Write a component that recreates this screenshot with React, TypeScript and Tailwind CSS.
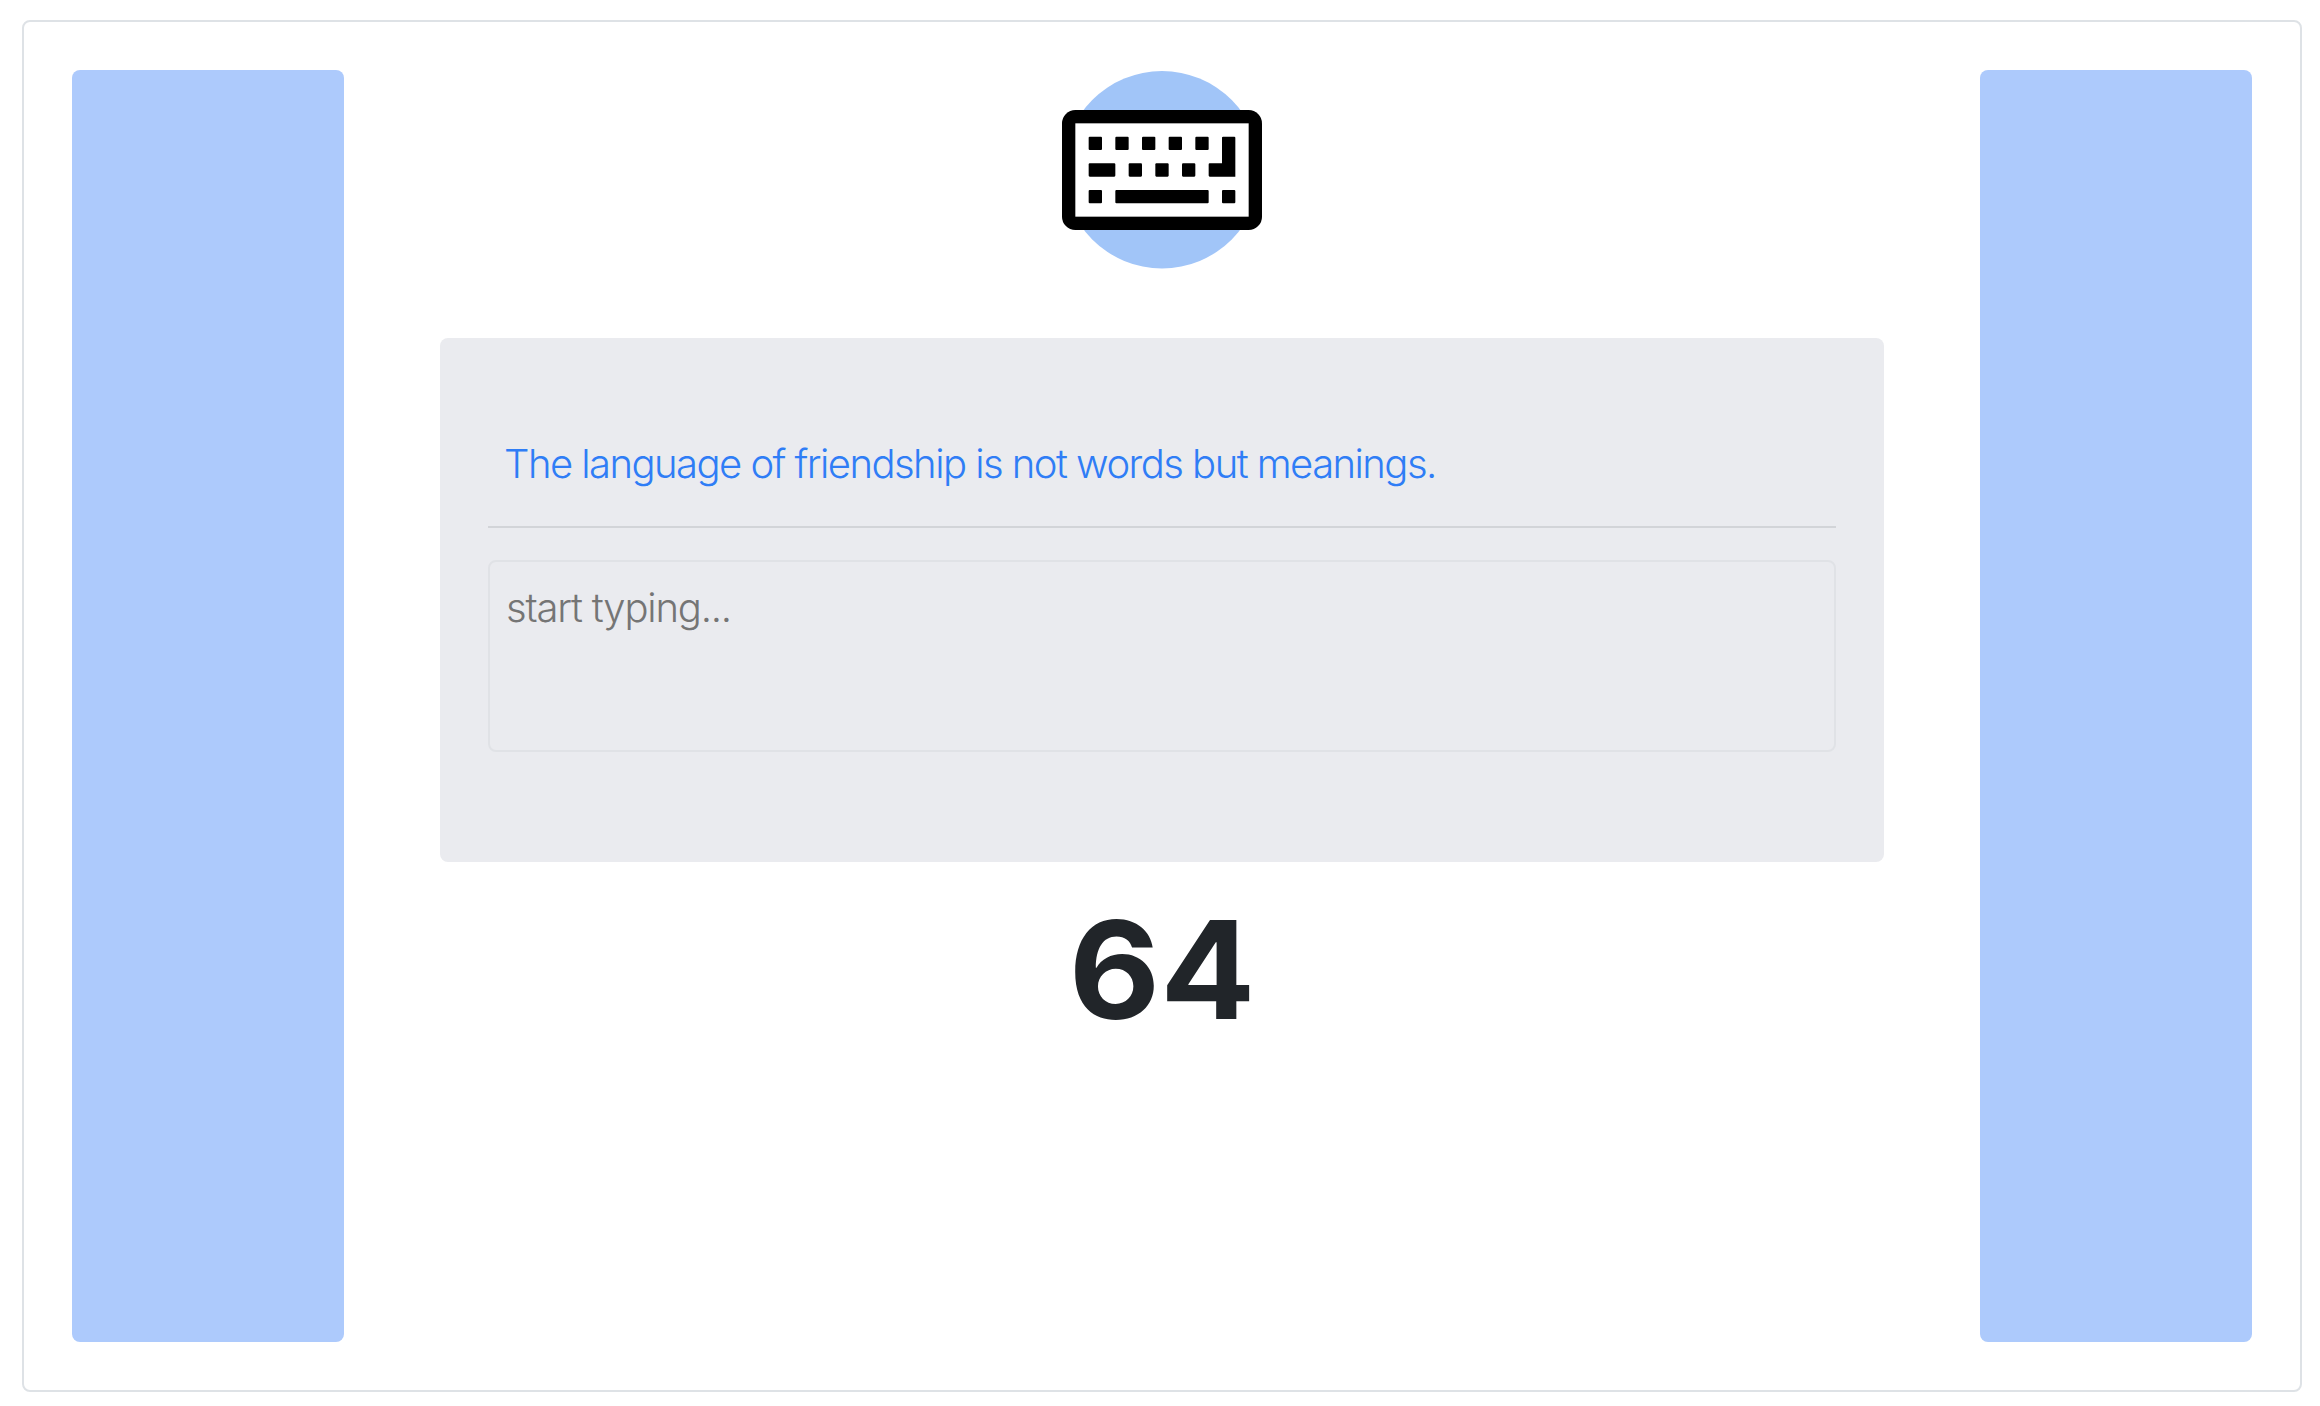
function KeyboardLogo() {
  return (
    <svg className="h-[200px] w-[200px]" viewBox="0 0 15 15" aria-hidden="true">
      <circle cx="7.5" cy="7.48" r="7.4" fill="#a1c5f8" />
      <rect x="0" y="3" width="15" height="9" rx="1" fill="#000" />
      <rect x="1" y="4" width="13" height="7" fill="#fff" />
      <g fill="#000">
        {[2, 4, 6, 8, 10].map((x) => (
          <rect key={x} x={x} y="5" width="1" height="1" rx="0.08" />
        ))}
        <rect x="2" y="7" width="2" height="1" rx="0.08" />
        {[5, 7, 9].map((x) => (
          <rect key={x} x={x} y="7" width="1" height="1" rx="0.08" />
        ))}
        <path d="M12.08 5h.84a.08.08 0 0 1 .08.08V8h-1.92a.08.08 0 0 1-.08-.08v-.84a.08.08 0 0 1 .08-.08H12V5.08a.08.08 0 0 1 .08-.08z" />
        <rect x="2" y="9" width="1" height="1" rx="0.08" />
        <rect x="4" y="9" width="7" height="1" rx="0.08" />
        <rect x="12" y="9" width="1" height="1" rx="0.08" />
      </g>
    </svg>
  );
}

export default function App() {
  return (
    <div className="h-[1406px] w-[2320px] bg-white pt-[20px] pl-[22px] font-['Inter',sans-serif] text-[#212529]">
      <div className="flex h-[1372px] w-[2280px] justify-between rounded-lg border-2 border-[#dee2e6] p-12">
        <aside className="w-[272px] rounded-lg bg-[#adcafc]" />
        <main className="flex w-[1444px] flex-col items-center">
          <KeyboardLogo />
          <section className="mt-[68px] h-[524px] w-full rounded-lg bg-[#eaebef] px-12 pt-[96px]">
            <p className="h-[92px] pl-4 text-[40px] leading-[60px] font-light tracking-[-1.54px] whitespace-nowrap text-[#2f7df6]">
              The language of friendship is not words but meanings.
            </p>
            <hr className="border-t-2 border-[#d2d4d8]" />
            <textarea
              className="mt-8 block h-[192px] w-full resize-none rounded-lg border-2 border-[#e0e2e6] bg-transparent px-4 pt-4 text-[40px] leading-[60px] font-light tracking-[-1.2px] outline-none placeholder:text-[#757575]"
              placeholder="start typing..."
            />
          </section>
          <div className="mt-[24px] origin-center scale-x-[1.035] text-[136px] leading-[168px] font-bold">64</div>
        </main>
        <aside className="w-[272px] rounded-lg bg-[#adcafc]" />
      </div>
    </div>
  );
}
